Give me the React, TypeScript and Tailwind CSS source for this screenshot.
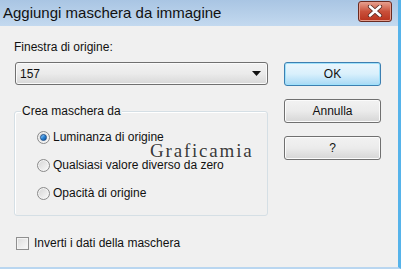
import { useState } from 'react';

const uiFont = { fontFamily: '"Liberation Sans", Arial, sans-serif' };

function Radio({ checked, label, onClick }: { checked: boolean; label: string; onClick: () => void }) {
  return (
    <button type="button" onClick={onClick} className="flex items-center h-[14px] gap-[3px] text-left">
      <span className="relative w-[13px] h-[13px] rounded-full border border-[#8a8a8a] bg-gradient-to-br from-[#d4d4d4] to-[#fafafa] flex items-center justify-center shadow-[inset_0_0_0_1px_#f4f4f4]">
        {checked && (
          <span className="w-[7px] h-[7px] rounded-full bg-gradient-to-br from-[#9fd6ff] via-[#2c86d6] to-[#0b4d9c] border border-[#1b4f8c]" />
        )}
      </span>
      <span className="text-[12px] leading-[14px] text-[#111]">{label}</span>
    </button>
  );
}

function Button({ label, primary }: { label: string; primary?: boolean }) {
  return (
    <button
      type="button"
      className={`w-[97px] h-[24px] rounded-[3px] border text-[12px] text-[#111] ${
        primary
          ? 'border-[#3c7fb1] bg-gradient-to-b from-[#eaf6fd] via-[#d9f0fc] to-[#a7d9f5] shadow-[inset_0_0_0_1px_#9fe1fb]'
          : 'border-[#707070] bg-gradient-to-b from-[#f2f2f2] via-[#ebebeb] to-[#d6d6d6] shadow-[inset_0_0_0_1px_#fbfbfb]'
      }`}
    >
      {label}
    </button>
  );
}

export default function App() {
  const [mode, setMode] = useState(0);
  const [invert, setInvert] = useState(false);
  const options = ['Luminanza di origine', 'Qualsiasi valore diverso da zero', 'Opacità di origine'];

  return (
    <div className="w-[401px] h-[269px] flex flex-col bg-[#f0f0f0] border-r-[3px] border-r-[#56b3ea] border-b-[2px] border-b-[#b9d6f0] overflow-hidden" style={uiFont}>
      {/* Title bar */}
      <div className="h-[26px] shrink-0 flex items-center justify-between pl-[3px] pr-[6px] bg-gradient-to-b from-[#a9c5e3] to-[#c3d9ef]">
        <span className="text-[15px] text-[#111] leading-none pb-[2px]">Aggiungi maschera da immagine</span>
        <button
          type="button"
          className="w-[34px] h-[21px] -mt-[4px] rounded-[3px] border border-[#6b2a20] bg-gradient-to-b from-[#e6a08f] via-[#c9503a] to-[#b8321c] flex items-center justify-center shadow-[inset_0_0_0_1px_#e59c8c]"
        >
          <svg width="16" height="12" viewBox="0 0 16 12">
            <path d="M3 1.5 L13 10.5 M13 1.5 L3 10.5" stroke="#5a2a22" strokeWidth="4.2" strokeLinecap="round" />
            <path d="M3 1.5 L13 10.5 M13 1.5 L3 10.5" stroke="#ffffff" strokeWidth="2.6" strokeLinecap="round" />
          </svg>
        </button>
      </div>

      {/* Body */}
      <div className="relative flex pl-[15px] pt-[14px]">
        <div className="w-[253px] flex flex-col">
          <span className="text-[12px] leading-[14px] text-[#111] -ml-[1px]">Finestra di origine:</span>
          <div className="mt-[8px] h-[23px] rounded-[3px] border border-[#707070] bg-gradient-to-b from-[#f2f2f2] via-[#ebebeb] to-[#d8d8d8] flex items-center justify-between pl-[4px] pr-[6px] shadow-[inset_0_0_0_1px_#fafafa]">
            <span className="text-[12px] text-[#111]">157</span>
            <svg width="9" height="5" viewBox="0 0 9 5">
              <path d="M0 0 H9 L4.5 5 Z" fill="#111" />
            </svg>
          </div>

          {/* Group box */}
          <div className="relative mt-[26px] -ml-[1px] h-[105px] rounded-[3px] border border-[#d5dfe5] shadow-[inset_1px_1px_0_#ffffff] flex flex-col gap-[14px] pt-[18px] pl-[22px]">
            <span className="absolute -top-[8px] left-[6px] px-[1px] bg-[#f0f0f0] text-[12px] leading-[14px] text-[#111]">
              Crea maschera da
            </span>
            {options.map((label, i) => (
              <Radio key={label} label={label} checked={mode === i} onClick={() => setMode(i)} />
            ))}
          </div>

          <button type="button" onClick={() => setInvert(!invert)} className="mt-[20px] ml-[1px] flex items-center gap-[5px] h-[14px]">
            <span className="w-[13px] h-[13px] border border-[#8f8f8f] bg-gradient-to-br from-[#dcdcdc] to-[#fbfbfb] shadow-[inset_0_0_0_1px_#f4f4f4]" />
            <span className="text-[12px] leading-[14px] text-[#111]">Inverti i dati della maschera</span>
          </button>
        </div>

        <div className="ml-[16px] pt-[22px] flex flex-col gap-[13px]">
          <Button label="OK" primary />
          <Button label="Annulla" />
          <Button label="?" />
        </div>

        {/* Watermark */}
        <span
          className="absolute left-[150px] top-[111px] text-[19px] tracking-[1.8px] text-[#3a3a3a] pointer-events-none [text-shadow:0_0_2px_#ffffff]"
          style={{ fontFamily: '"Liberation Serif", "Times New Roman", serif' }}
        >
          Graficamia
        </span>
      </div>
    </div>
  );
}
